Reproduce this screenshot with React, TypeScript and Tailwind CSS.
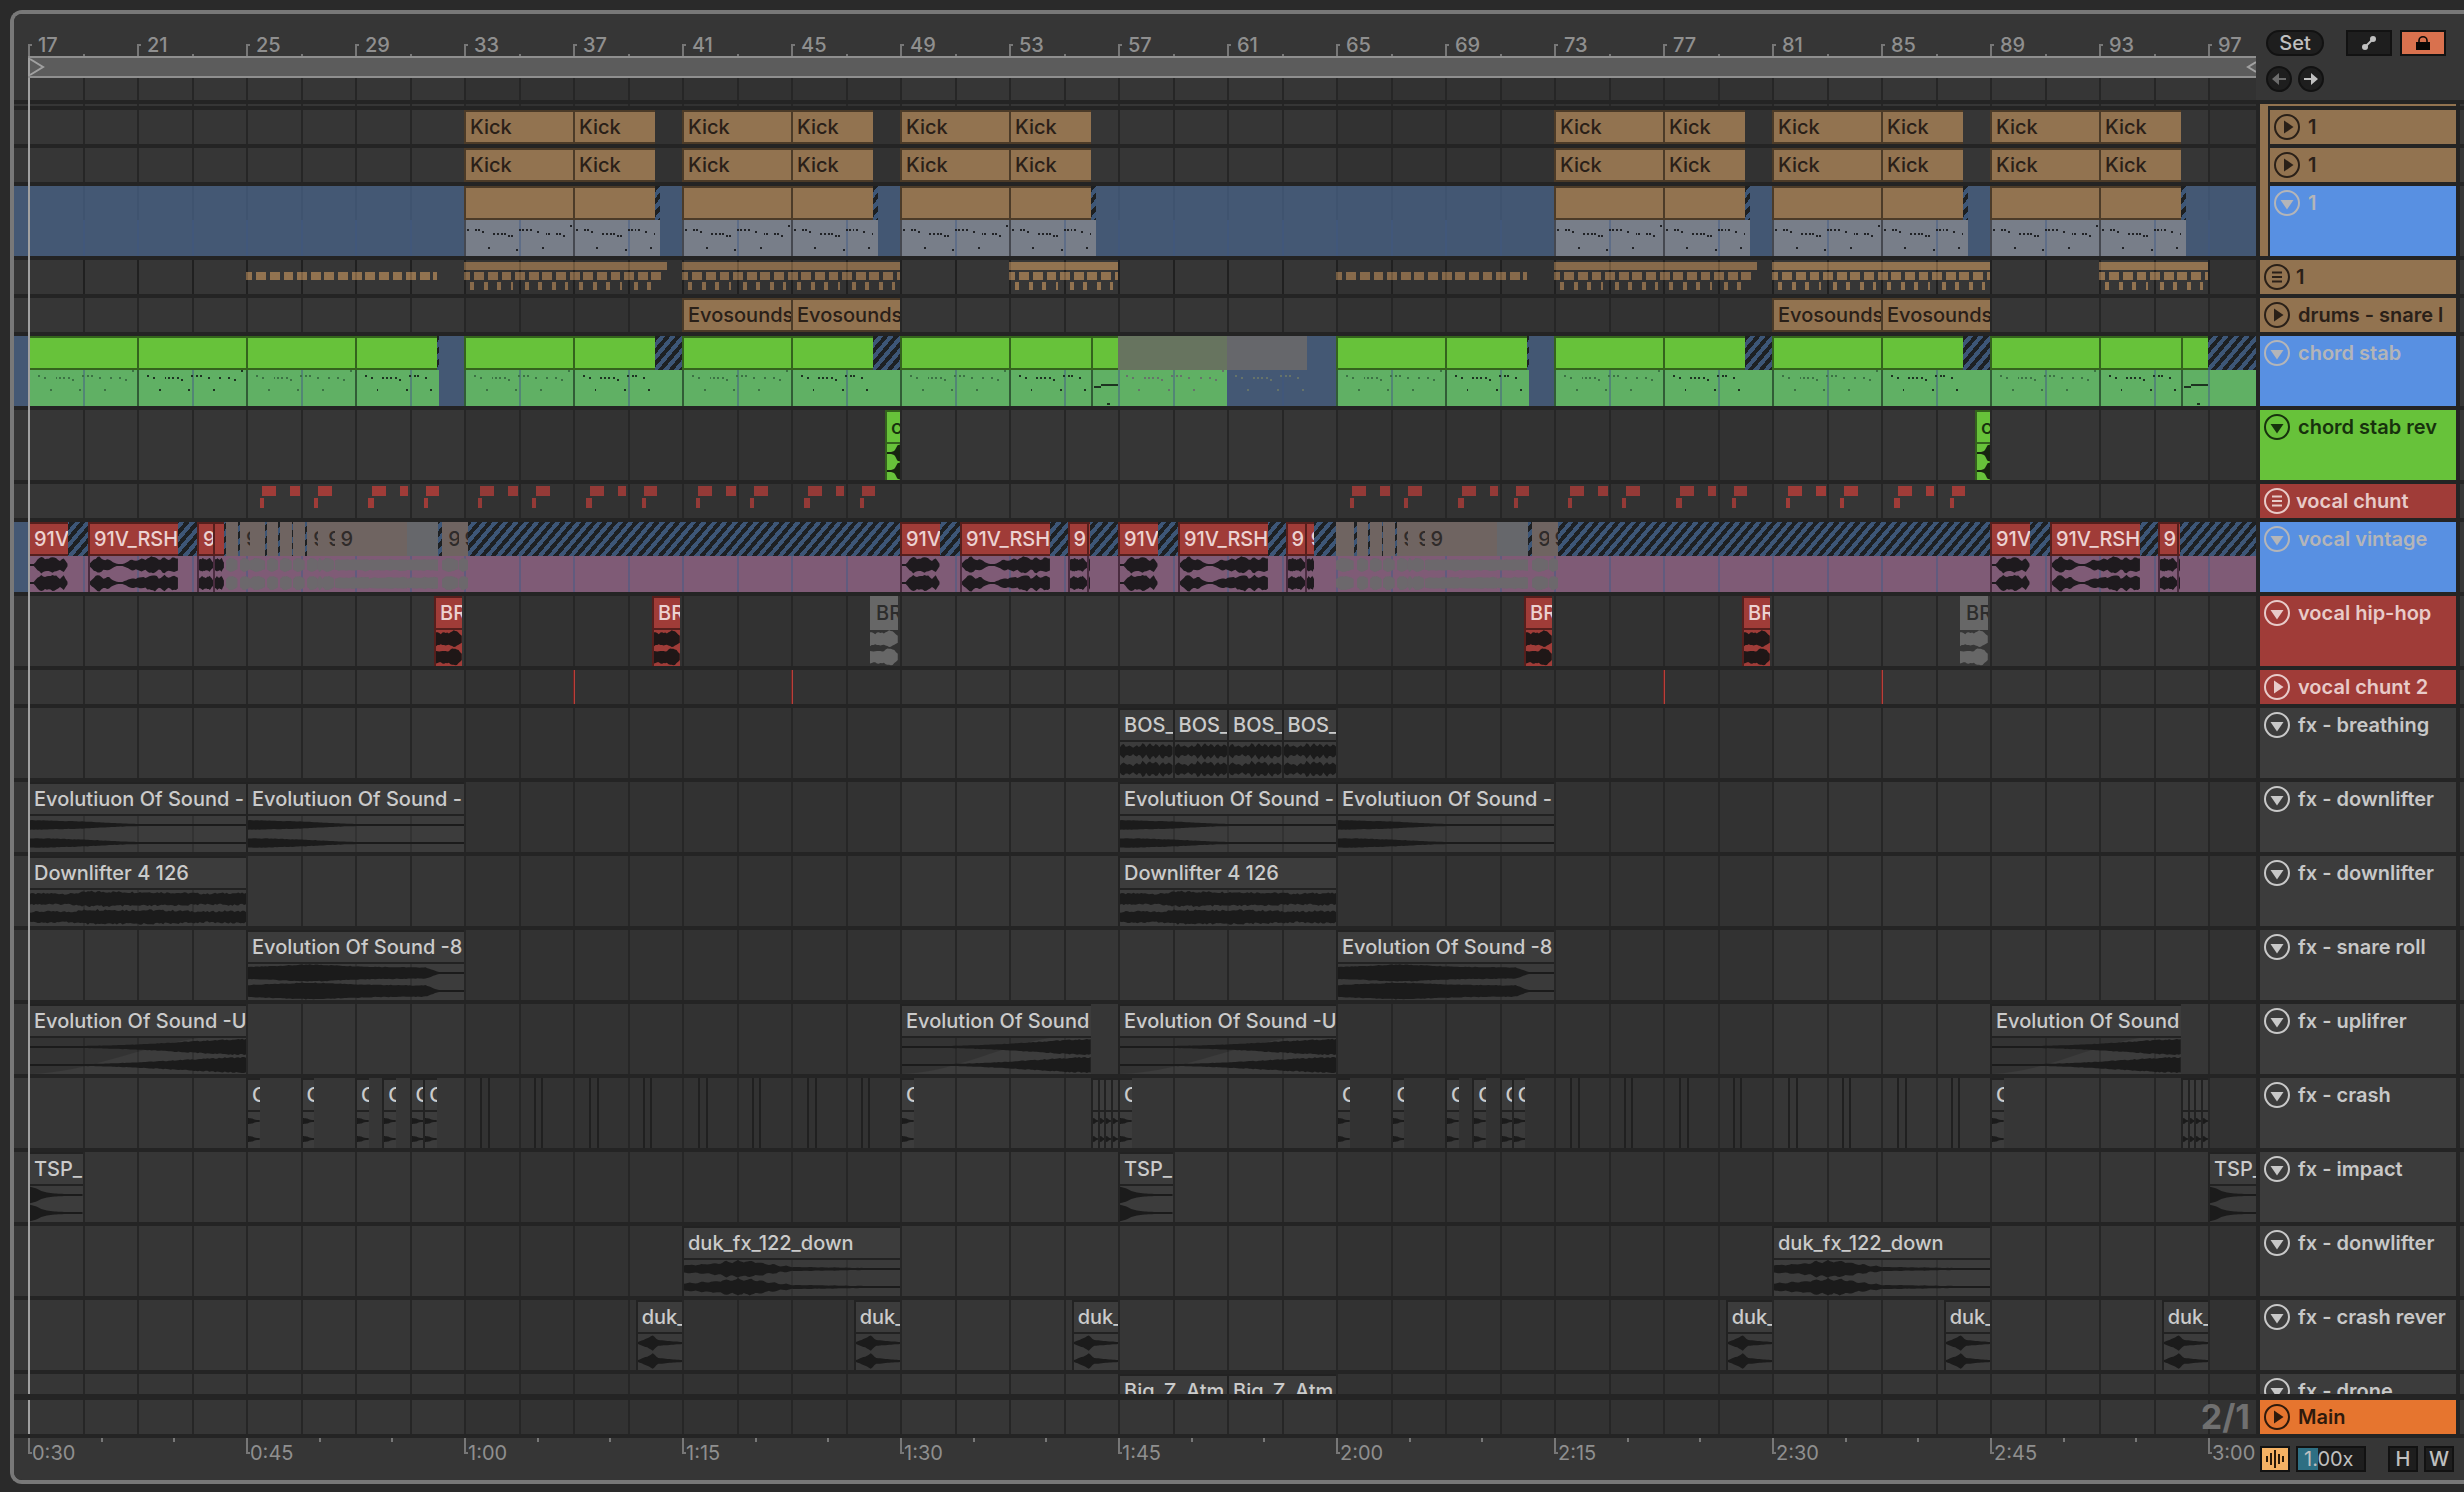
// App.tsx
// ============================================================================
// Arrangement view: beat ruler, clip lanes, track headers and time ruler
//
// Notes:
// - Horizontal positions are stored in bars and turned into percentages
// - Waveforms are generated from short amplitude envelopes
// ============================================================================

import { clsx } from "clsx";

const START = 16.486;
const SPAN = 82.275;
const END = START + SPAN;

const pos = (bar: number) => `${((bar - START) / SPAN) * 100}%`;
const size = (bars: number) => `${(bars / SPAN) * 100}%`;
const range = (n: number) => Array.from({ length: n }, (_, i) => i);

type Tone = "tan" | "tanSel" | "green" | "greenSel" | "red" | "redSel" | "gray" | "off" | "offSel" | "offGreen" | "offBlue";

type Clip = {
  at: number;
  len: number;
  tone: Tone;
  label?: string;
  wave?: keyof typeof ENVELOPES;
  notes?: "bass" | "stab" | "stabDim" | "stabOff" | "turn";
};

type Strip = { at: number; len: number; className: string };

type Track = {
  name: string;
  header: keyof typeof HEADERS;
  icon: "right" | "down" | "group";
  tall?: boolean;
  selected?: boolean;
  clips?: Clip[];
  strips?: Strip[];
  hatches?: [number, number][];
  blocks?: { at: number; len: number; row: "top" | "mid" | "low"; className: string }[];
  ticks?: { at: number; className: string }[];
};

const HEADERS = {
  tan: "bg-[#927350] text-[#2a2018]",
  blue: "bg-[#5890e2] text-[#b4b5b8]",
  green: "bg-[#67c23a] text-[#17320d]",
  red: "bg-[#a03c38] text-[#e8cbc9]",
  gray: "bg-[#3c3c3c] text-[#c8c8c8]",
  orange: "bg-[#e6752f] text-[#2f1a0c]",
};

const TONES: Record<Tone, { head: string; body: string; wave: string }> = {
  tan: { head: "bg-[#927350] border-[#4c3b28] text-[#2a2018] border-l-2 border-y-2", body: "", wave: "" },
  tanSel: {
    head: "bg-[#927350] border-[#4c3b28] border-l-2 border-y-2",
    body: "border-l-2 border-[#454850]",
    wave: "text-[#1e1e20]",
  },
  green: {
    head: "bg-[#67c23a] border-[#34631d] text-[#17320d] border-l-2 border-y-2",
    body: "bg-[#67c23a] border-l-2 border-[#34631d]",
    wave: "text-[#172410]",
  },
  greenSel: {
    head: "bg-[#67c23a] border-[#34631d] border-l-2 border-y-2",
    body: "border-l-2 border-[#315c36]",
    wave: "text-[#1d3321]",
  },
  red: {
    head: "bg-[#a03c38] border-[#561f1d] text-[#ecd2d1] border-l-2 border-y-2",
    body: "bg-[#a03c38] border-l-2 border-[#561f1d]",
    wave: "text-[#1f1717]",
  },
  redSel: {
    head: "bg-[#a03c38] border-[#561f1d] text-[#ecd2d1] border-l-2 border-y-2",
    body: "border-l-2 border-[#4a2c40]",
    wave: "text-[#1e1a1e]",
  },
  gray: {
    head: "bg-[#3c3c3c] border-[#222222] text-[#cbcbcb] border-l-2 border-y-2",
    body: "bg-[#454545]/40 border-l-2 border-[#222222]",
    wave: "text-[#1b1b1b]",
  },
  off: { head: "bg-[#676767] text-[#2c2c2c] border-l-2 border-y-2 border-[#676767]", body: "", wave: "text-[#676767]" },
  offSel: { head: "bg-[#6f6461] text-[#2f2b2a] border-l-2 border-y-2 border-[#6f6461]", body: "", wave: "text-[#6c686c]" },
  offGreen: { head: "bg-[#67745f]", body: "", wave: "" },
  offBlue: { head: "bg-[#66676b]", body: "", wave: "text-[#6c686c]" },
};

/* Amplitudes from 0 to 1, spread evenly over the clip */
const ENVELOPES = {
  phrase: { points: [0.1, 0.1, 0.6, 0.95, 0.7, 0.75, 0.9, 0.8, 0.5, 0.85, 0.15], jitter: 0.1 },
  verse: {
    points: [0.2, 0.7, 0.95, 0.5, 0.7, 0.3, 0.1, 0.1, 0.35, 0.6, 0.5, 0.7, 0.6, 0.9, 1, 0.5, 1, 0.6, 0.9, 0.7],
    jitter: 0.12,
  },
  word: { points: [0.6, 0.75, 0.6, 0.8, 0.3], jitter: 0.1 },
  chop: { points: [0.5, 0.8, 0.75, 0.5], jitter: 0.08 },
  drone: { points: [0.55, 0.65, 0.6, 0.65, 0.6, 0.7, 0.6, 0.65, 0.7, 0.65], jitter: 0.08 },
  shout: { points: [0.8, 0.6, 0.75, 0.65, 1, 0.85, 0.4], jitter: 0.12 },
  breath: {
    points: [0.45, 0.85, 0.4, 0.65, 0.35, 0.7, 0.4, 1, 0.45, 1, 0.5, 0.95, 0.4, 0.9, 0.45, 0.8, 0.4],
    jitter: 0.1,
  },
  fall: { points: [0.55, 0.52, 0.46, 0.38, 0.26, 0.16, 0.1, 0.1, 0.1, 0.1, 0.1, 0.1], jitter: 0.06 },
  noise: { points: [0.6, 0.65, 0.6, 0.85, 0.85, 0.8, 0.8, 0.75, 0.7, 0.6, 0.7, 0.65], jitter: 0.16 },
  roll: {
    points: [0.7, 0.75, 0.82, 0.88, 0.94, 0.98, 0.95, 0.88, 0.82, 0.76, 0.72, 0.7, 0.68, 0.66, 0.66, 0.1, 0.1, 0.1],
    jitter: 0.05,
  },
  rise: { points: [0.1, 0.1, 0.1, 0.14, 0.22, 0.32, 0.44, 0.58, 0.72, 0.84, 0.9], jitter: 0.08 },
  crash: { points: [0.35, 0.3, 0.14, 0.1], jitter: 0 },
  impact: { points: [0.98, 0.8, 0.45, 0.28, 0.2, 0.15, 0.12, 0.1, 0.1, 0.1], jitter: 0 },
  swell: {
    points: [
      0.4, 0.5, 0.4, 0.6, 0.5, 0.7, 0.6, 0.95, 0.7, 1, 0.75, 1, 0.7, 0.8, 0.45, 0.6, 0.3, 0.4, 0.22, 0.25, 0.2, 0.25,
      0.18, 0.22, 0.16, 0.2, 0.14, 0.16, 0.12, 0.14, 0.12, 0.12, 0.1, 0.1, 0.1, 0.1, 0.1,
    ],
    jitter: 0.06,
  },
  reverse: { points: [0.1, 0.35, 0.55, 0.9, 0.35, 0.3, 0.25, 0.2, 0.15, 0.12], jitter: 0.06 },
  pluck: { points: [0.12, 0.12, 0.14, 0.3, 0.9, 1], jitter: 0 },
};

/* x, y of each note in a four bar phrase, 109 units wide */
const BASS: [number, number][] = [
  [1, 9], [9, 9], [12, 9], [16, 11], [28, 13], [32, 13], [36, 13], [39, 13], [43, 15], [46, 15], [22, 27], [51, 29],
  [54, 9], [57, 9], [61, 9], [65, 9], [72, 11], [81, 13], [84, 13], [92, 13], [95, 13], [99, 15], [77, 27], [106, 5],
];
const STAB: [number, number][] = [
  [8, 5], [14, 7], [26, 7], [30, 7], [34, 7], [39, 7], [43, 9], [20, 19], [50, 19], [53, 5], [58, 5], [62, 5],
  [70, 7], [82, 7], [91, 7], [97, 9], [75, 19], [104, 0],
];
const TURN: [number, number][] = [
  [1, 16], [4, 16], [6, 16], [9, 14], [12, 14], [15, 14], [18, 14], [21, 14], [24, 14], [15, 33],
];

const NOTE_SETS = {
  bass: { notes: BASS, className: "text-[#202226]" },
  stab: { notes: STAB, className: "text-[#1d3321]" },
  stabDim: { notes: STAB, className: "text-[#3c7344]" },
  stabOff: { notes: STAB, className: "text-[#66736a]" },
  turn: { notes: TURN, className: "text-[#1d3321]" },
};

const KICK_STARTS = [33, 41, 49, 73, 81, 89];

const kicks: Clip[] = KICK_STARTS.flatMap((s): Clip[] => [
  { at: s, len: 4, tone: "tan", label: "Kick" },
  { at: s + 4, len: 3, tone: "tan", label: "Kick" },
]);

const bass: Clip[] = KICK_STARTS.flatMap((s): Clip[] => [
  { at: s, len: 4, tone: "tanSel", notes: "bass" },
  { at: s + 4, len: 3, tone: "tanSel", notes: "bass" },
]);

const stab = (at: number, len: number, notes: Clip["notes"]): Clip => ({ at, len, tone: "greenSel", notes });

const stabs: Clip[] = [
  stab(17, 4, "stabDim"),
  stab(21, 4, "stab"),
  stab(25, 4, "stabDim"),
  stab(29, 3, "stab"),
  ...[33, 41, 49].flatMap((s) => [stab(s, 4, "stabDim"), stab(s + 4, 3, "stab")]),
  stab(56, 1, "turn"),
  { at: 57, len: 4, tone: "offGreen", notes: "stabOff" },
  { at: 61, len: 2.95, tone: "offBlue", notes: "stabOff" },
  ...[65, 73, 81, 89].flatMap((s) => [stab(s, 4, "stabDim"), stab(s + 4, 3, "stab")]),
  stab(96, 1, "turn"),
];

const drumBlocks = [
  { at: 25, len: 7, full: false, className: "bg-[#927350]" },
  { at: 33, len: 7.45, full: true, className: "bg-[#876a4b]" },
  { at: 41, len: 8, full: true, className: "bg-[#876a4b]" },
  { at: 53, len: 4, full: true, className: "bg-[#927350]" },
  { at: 65, len: 7, full: false, className: "bg-[#876a4b]" },
  { at: 73, len: 7.45, full: true, className: "bg-[#876a4b]" },
  { at: 81, len: 8, full: true, className: "bg-[#927350]" },
  { at: 93, len: 4, full: true, className: "bg-[#927350]" },
].flatMap(({ at, len, full, className }) => [
  { at, len: 0.22, row: "mid" as const, className },
  ...range(Math.floor(len * 2)).map((i) => ({
    at: at + 0.38 + i * 0.5,
    len: Math.min(0.36, len - 0.38 - i * 0.5),
    row: "mid" as const,
    className,
  })),
  ...(full
    ? [
        { at, len, row: "top" as const, className },
        ...range(Math.floor(len * 2)).map((i) => ({
          at: at + 0.22 + i * 0.5,
          len: i % 4 === 3 ? 0.09 : 0.15,
          row: "low" as const,
          className,
        })),
      ]
    : []),
]);

const chuntBlocks = [25, 33, 41, 65, 73, 81].flatMap((s) => {
  const className = s === 25 || s === 81 ? "bg-[#a03c38]" : "bg-[#943a37]";
  return [
    ...[[0.59, 0.5], [1.6, 0.37], [2.64, 0.5], [4.62, 0.5], [5.65, 0.3], [6.6, 0.5]].map(([at, len]) => ({
      at: s + at,
      len,
      row: "top" as const,
      className,
    })),
    ...[[0.51, 0.15], [2.5, 0.15], [4.47, 0.21], [6.53, 0.15]].map(([at, len]) => ({
      at: s + at,
      len,
      row: "mid" as const,
      className,
    })),
  ];
});

const phrase = (s: number): Clip[] => [
  { at: s, len: 1.45, tone: "redSel", label: "91V", wave: "phrase" },
  { at: s + 2.2, len: 3.3, tone: "redSel", label: "91V_RSH", wave: "verse" },
];

const word = (at: number, len: number, label = "9"): Clip => ({ at, len, tone: "redSel", label, wave: "word" });

const muted = (at: number, len: number, label?: string, wave: Clip["wave"] = "chop"): Clip => ({
  at,
  len,
  tone: "offSel",
  label,
  wave,
});

const mutedRun = (s: number): Clip[] => [
  muted(s + 0.77, 0.41),
  muted(s + 1.25, 0.43),
  muted(s + 1.73, 0.43),
  muted(s + 2.25, 0.4, "9"),
  muted(s + 2.65, 0.15),
  muted(s + 2.8, 0.45, "9"),
  muted(s + 3.25, 1.25, "9", "drone"),
  muted(s + 4.5, 1.4, undefined, "drone"),
  { ...muted(s + 5.9, 1.15, undefined, "drone"), tone: "offBlue" },
  muted(s + 7.2, 0.6, "9"),
  muted(s + 7.8, 0.35, "9"),
];

const vintage: Clip[] = [
  ...phrase(17),
  word(23.2, 0.6),
  word(23.8, 0.4, ""),
  muted(24.28, 0.42),
  muted(24.78, 0.37, "9"),
  muted(25.15, 0.55),
  ...mutedRun(25),
  ...phrase(49),
  word(55.15, 0.7),
  word(55.85, 0.12, ""),
  ...phrase(57),
  word(63.15, 0.7),
  word(63.85, 0.35),
  muted(65, 0.65),
  ...mutedRun(65),
  ...phrase(89),
  word(95.15, 0.7),
  word(95.85, 0.12, ""),
];

const fx = (at: number, len: number, label: string, wave: Clip["wave"]): Clip => ({
  at,
  len,
  tone: "gray",
  label,
  wave,
});

const crashTicks = [33, 73].flatMap((s) =>
  range(8).flatMap((i) => [
    { at: s + i * 2 + 0.58, className: "bg-[#202020]" },
    { at: s + i * 2 + (i % 2 ? 0.82 : 0.88), className: "bg-[#202020]" },
  ]),
);

const RED_TICK = "bg-[#b8403b] border-l border-[#6a2523]";

const TRACKS: Track[] = [
  { name: "1", header: "tan", icon: "right", clips: kicks },
  { name: "1", header: "tan", icon: "right", clips: kicks },
  {
    name: "1",
    header: "blue",
    icon: "down",
    tall: true,
    selected: true,
    strips: KICK_STARTS.map((s) => ({ at: s, len: 7.2, className: "bg-[#787e89]" })),
    hatches: KICK_STARTS.map((s) => [s + 7, 0.2]),
    clips: bass,
  },
  { name: "1", header: "tan", icon: "group", blocks: drumBlocks },
  {
    name: "drums - snare l",
    header: "tan",
    icon: "right",
    clips: [41, 45, 81, 85].map((at) => ({ at, len: 4, tone: "tan", label: "Evosounds" })),
  },
  {
    name: "chord stab",
    header: "blue",
    icon: "down",
    tall: true,
    selected: true,
    strips: [
      { at: 17, len: 15.08, className: "bg-[#60b064]" },
      { at: 33, len: 28, className: "bg-[#60b064]" },
      { at: 65, len: 7.08, className: "bg-[#60b064]" },
      { at: 73, len: END - 73, className: "bg-[#60b064]" },
    ],
    hatches: [[32, 0.08], [40, 1], [48, 1], [72, 0.08], [80, 1], [88, 1], [97, END - 97]],
    clips: stabs,
  },
  {
    name: "chord stab rev",
    header: "green",
    icon: "down",
    tall: true,
    clips: [48.45, 88.45].map((at) => ({ at, len: 0.55, tone: "green", label: "c", wave: "pluck" })),
  },
  { name: "vocal chunt", header: "red", icon: "group", blocks: chuntBlocks },
  {
    name: "vocal vintage",
    header: "blue",
    icon: "down",
    tall: true,
    selected: true,
    strips: [{ at: 17, len: END - 17, className: "bg-[#7f5b76]" }],
    hatches: [[17, END - 17]],
    clips: vintage,
  },
  {
    name: "vocal hip-hop",
    header: "red",
    icon: "down",
    tall: true,
    clips: [32, 40, 48, 72, 80, 88].map((at) => ({
      at: at - 0.1,
      len: 1.02,
      tone: at === 48 || at === 88 ? "off" : "red",
      label: "BR",
      wave: "shout",
    })),
  },
  {
    name: "vocal chunt 2",
    header: "red",
    icon: "right",
    ticks: [37, 45, 77, 85].map((at) => ({ at, className: RED_TICK })),
  },
  {
    name: "fx - breathing",
    header: "gray",
    icon: "down",
    tall: true,
    clips: [57, 59, 61, 63].map((at) => fx(at, 2, "BOS_", "breath")),
  },
  {
    name: "fx - downlifter",
    header: "gray",
    icon: "down",
    tall: true,
    clips: [17, 25, 57, 65].map((at) => fx(at, 8, "Evolutiuon Of Sound -", "fall")),
  },
  {
    name: "fx - downlifter",
    header: "gray",
    icon: "down",
    tall: true,
    clips: [17, 57].map((at) => fx(at, 8, "Downlifter 4 126", "noise")),
  },
  {
    name: "fx - snare roll",
    header: "gray",
    icon: "down",
    tall: true,
    clips: [25, 65].map((at) => fx(at, 8, "Evolution Of Sound -8", "roll")),
  },
  {
    name: "fx - uplifrer",
    header: "gray",
    icon: "down",
    tall: true,
    clips: [
      fx(17, 8, "Evolution Of Sound -U", "rise"),
      fx(49, 7, "Evolution Of Sound", "rise"),
      fx(57, 8, "Evolution Of Sound -U", "rise"),
      fx(89, 7, "Evolution Of Sound", "rise"),
    ],
  },
  {
    name: "fx - crash",
    header: "gray",
    icon: "down",
    tall: true,
    clips: [
      ...[25, 27, 29, 30, 31, 31.5, 49, 57, 65, 67, 69, 70, 71, 71.45, 89].map((at) => fx(at, 0.5, "C", "crash")),
      ...[56, 56.25, 56.5, 56.75, 96, 96.25, 96.5, 96.75].map((at) => fx(at, 0.25, "", "crash")),
    ],
    ticks: crashTicks,
  },
  {
    name: "fx - impact",
    header: "gray",
    icon: "down",
    tall: true,
    clips: [17, 57, 97].map((at) => fx(at, 2, "TSP_", "impact")),
  },
  {
    name: "fx - donwlifter",
    header: "gray",
    icon: "down",
    tall: true,
    clips: [41, 81].map((at) => fx(at, 8, "duk_fx_122_down", "swell")),
  },
  {
    name: "fx - crash rever",
    header: "gray",
    icon: "down",
    tall: true,
    clips: [41, 49, 57, 81, 89, 97].map((at) => fx(at - 1.7, 1.7, "duk_", "reverse")),
  },
  {
    name: "fx - drone",
    header: "gray",
    icon: "down",
    tall: true,
    clips: [57, 61].map((at) => fx(at, 4, "Big_Z_Atm", "noise")),
  },
];

const GROUP_SIZE = 3;

const Waveform = ({ name, len }: { name: keyof typeof ENVELOPES; len: number }) => {
  const { points, jitter } = ENVELOPES[name];
  const n = Math.max(16, Math.round(len * 14));
  const amp = (i: number, seed: number) => {
    const t = (i / n) * (points.length - 1);
    const k = Math.min(Math.floor(t), points.length - 2);
    const base = points[k] + (points[k + 1] - points[k]) * (t - k);
    const noise = Math.sin((i + seed) * 12.9898) * 43758.5453;
    return Math.max(1, 8.5 * base * (1 + (noise - Math.floor(noise) - 0.5) * jitter * 2));
  };
  const channel = (mid: number) => {
    const up = range(n + 1).map((i) => `${(i / n) * 100},${mid - amp(i, mid)}`);
    const down = range(n + 1).map((i) => `${(i / n) * 100},${mid + amp(i, mid + 5)}`);
    return [...up, ...down.reverse()].join(" ");
  };

  return (
    <svg viewBox="0 0 100 36" preserveAspectRatio="none" className="h-full w-full" aria-hidden="true">
      {/* Fade-in curve */}
      {name === "rise" && <path d="M0 0V36C28 34 48 10 78 0Z" fill="black" opacity="0.14" />}
      <polygon points={channel(9)} fill="currentColor" />
      <polygon points={channel(27)} fill="currentColor" />
    </svg>
  );
};

const Notes = ({ set, len }: { set: keyof typeof NOTE_SETS; len: number }) => {
  const width = len * 27.25;
  return (
    <svg
      viewBox={`0 0 ${width} 36`}
      preserveAspectRatio="none"
      className={clsx("h-full w-full", NOTE_SETS[set].className)}
      shapeRendering="crispEdges"
      aria-hidden="true"
    >
      {NOTE_SETS[set].notes.map(([x, y]) => (
        <rect key={`${x}-${y}`} x={x} y={y} width={set === "turn" ? 3 : 2} height="2" fill="currentColor" />
      ))}
    </svg>
  );
};

const GridLines = ({ className }: { className: string }) => (
  <>
    {range(41).map((i) => (
      <div key={i} className={clsx("absolute bottom-0 w-0.5", className)} style={{ left: pos(17 + i * 2) }} />
    ))}
  </>
);

const ClipView = ({ clip, tall }: { clip: Clip; tall?: boolean }) => {
  const tone = TONES[clip.tone];
  return (
    <div
      className="absolute inset-y-0 flex flex-col overflow-hidden"
      style={{ left: pos(clip.at), width: size(clip.len) }}
    >
      <div
        className={clsx(
          "h-[34px] shrink-0 overflow-hidden whitespace-nowrap font-medium leading-[30px]",
          clip.label && "pl-1",
          tone.head,
        )}
      >
        {clip.label}
      </div>
      {tall && (
        <div className={clsx("min-h-0 flex-1", tone.body, tone.wave)}>
          {clip.wave && <Waveform name={clip.wave} len={clip.len} />}
          {clip.notes && <Notes set={clip.notes} len={clip.len} />}
        </div>
      )}
    </div>
  );
};

const BLOCK_ROWS = {
  drums: { top: "top-0.5 h-2", mid: "top-3 h-2", low: "top-[22px] h-2" },
  vocal: { top: "top-0.5 h-2.5", mid: "top-3.5 h-2.5", low: "" },
};

const Lane = ({ track }: { track: Track }) => {
  const rows = track.header === "tan" ? BLOCK_ROWS.drums : BLOCK_ROWS.vocal;
  return (
    <div className="shrink-0 border-b-4 border-[#242424]">
      <div
        className={clsx(
          "relative overflow-hidden",
          track.tall ? "h-[70px]" : "h-[34px]",
          track.selected && "bg-[#4a678f]/70",
        )}
      >
        {track.strips?.map((s) => (
          <div
            key={s.at}
            className={clsx("absolute bottom-0 top-[34px]", s.className)}
            style={{ left: pos(s.at), width: size(s.len) }}
          />
        ))}
        {track.selected && <GridLines className="top-[34px] bg-[#445c86]/50" />}
        {track.hatches?.map(([at, len]) => (
          <div
            key={at}
            className="absolute top-0 h-[34px] bg-[repeating-linear-gradient(130deg,#1d2023_0_4px,#3d5677_4px_8px)]"
            style={{ left: pos(at), width: size(len) }}
          />
        ))}
        {track.blocks?.map((b) => (
          <div
            key={`${b.at}-${b.row}-${b.len}`}
            className={clsx("absolute", rows[b.row], b.className)}
            style={{ left: pos(b.at), width: size(b.len) }}
          />
        ))}
        {track.icon === "group" && track.header === "tan" && <GridLines className="top-0 bg-black/15" />}
        {track.ticks?.map((t) => (
          <div key={t.at} className={clsx("absolute inset-y-0 w-0.5", t.className)} style={{ left: pos(t.at) }} />
        ))}
        {track.clips?.map((c) => (
          <ClipView key={c.at} clip={c} tall={track.tall} />
        ))}
      </div>
    </div>
  );
};

const FoldIcon = ({ icon }: { icon: Track["icon"] }) => (
  <svg viewBox="0 0 26 26" className="size-[26px]" aria-hidden="true">
    <circle cx="13" cy="13" r="12" fill="none" stroke="currentColor" strokeWidth="2" />
    {icon === "right" && <path d="M10 6.5 19.5 13 10 19.5Z" fill="currentColor" />}
    {icon === "down" && <path d="M6.5 10h13L13 19.5Z" fill="currentColor" />}
    {icon === "group" && <path d="M8 8.5h10M8 13h10M8 17.5h10" stroke="currentColor" strokeWidth="2" />}
  </svg>
);

const TrackHeader = ({ track }: { track: Track }) => (
  <div className="flex shrink-0 gap-1 border-b-4 border-[#242424]">
    <div
      className={clsx(
        "flex min-w-0 flex-1 items-start overflow-hidden whitespace-nowrap pl-1 pt-1 font-semibold leading-[26px]",
        track.icon === "group" ? "gap-1.5" : "gap-2",
        track.tall ? "h-[70px]" : "h-[34px]",
        HEADERS[track.header],
      )}
    >
      <button type="button" aria-label={`Fold ${track.name}`} className="shrink-0">
        <FoldIcon icon={track.icon} />
      </button>
      <span>{track.name}</span>
    </div>
    <div className="w-1 bg-[#363636]" />
  </div>
);

const BeatRuler = () => (
  <div className="relative h-[42px] shrink-0 overflow-hidden font-medium text-[#8f8f8f]">
    {range(21).map((i) => (
      <div key={i} className="absolute bottom-0 flex items-end" style={{ left: pos(17 + i * 4) }}>
        <span className="h-3 w-1 border-l-2 border-t-2 border-[#777777]" />
        <span className="pl-1.5 leading-[22px]">{17 + i * 4}</span>
      </div>
    ))}
    {range(20).map((i) => (
      <div key={i} className="absolute bottom-0 h-0.5 w-0.5 bg-[#777777]" style={{ left: pos(19 + i * 4) }} />
    ))}
  </div>
);

const LoopBrace = () => (
  <div className="relative h-[22px] shrink-0">
    <div
      className="absolute inset-y-0 right-0 flex items-center justify-between border-y-2 border-[#8f8f8f] bg-[#5c5c5c] text-[#a0a0a0]"
      style={{ left: pos(17) }}
    >
      <svg viewBox="0 0 18 18" className="size-[18px]" aria-hidden="true">
        <path d="M1 0v18M2 1l13 8L2 17" fill="none" stroke="currentColor" strokeWidth="2" />
      </svg>
      <svg viewBox="0 0 10 18" className="h-[18px] w-2.5" aria-hidden="true">
        <path d="M10 4 2 9l8 5" fill="none" stroke="currentColor" strokeWidth="2" />
      </svg>
    </div>
  </div>
);

const formatTime = (seconds: number) => `${Math.floor(seconds / 60)}:${String(seconds % 60).padStart(2, "0")}`;

const TimeRuler = () => (
  <div className="relative h-[42px] shrink-0 overflow-hidden text-[#8f8f8f]">
    {range(11).map((i) => (
      <div key={i} className="absolute top-0 flex" style={{ left: pos(17 + i * 8) }}>
        <span className="h-4 w-1 border-b-2 border-l-2 border-[#777777]" />
        <span className="pt-1 leading-[22px]">{formatTime(30 + i * 15)}</span>
      </div>
    ))}
    {range(30)
      .filter((i) => i % 3 !== 0)
      .map((i) => (
        <div key={i} className="absolute top-0 h-1 w-0.5 bg-[#777777]" style={{ left: pos(17 + (i * 8) / 3) }} />
      ))}
  </div>
);

/* 16 bar blocks alternate between two greys */
const GridBackground = () => (
  <div className="absolute inset-0">
    {[33, 65, 97].map((bar) => (
      <div
        key={bar}
        className="absolute inset-y-0 bg-[#323232]"
        style={{ left: pos(bar), width: size(Math.min(16, END - bar)) }}
      />
    ))}
    <GridLines className="top-0 bg-[#262626]" />
  </div>
);

const Timeline = () => (
  <section aria-label="Arrangement" className="relative flex min-w-0 flex-1 flex-col bg-[#363636]">
    <BeatRuler />
    <LoopBrace />
    <div className="relative flex min-h-0 flex-1 flex-col overflow-hidden">
      <GridBackground />
      <div className="relative flex flex-col">
        <div className="h-[26px] shrink-0 border-b-4 border-[#242424]" />
        <div className="h-1.5 shrink-0 border-b-4 border-[#242424]" />
        {TRACKS.map((track, i) => (
          <Lane key={i} track={track} />
        ))}
      </div>
      <div className="absolute inset-y-0 w-0.5 bg-[#a0a0a0]" style={{ left: pos(17) }} />
    </div>
    <div className="relative h-11 shrink-0 border-b-4 border-t-[6px] border-[#242424]">
      <GridBackground />
      <div className="absolute inset-y-0 w-0.5 bg-[#a0a0a0]" style={{ left: pos(17) }} />
      <div className="relative flex h-full items-center justify-end pr-1.5 text-[34px] font-bold leading-none text-[#707070]">
        2/1
      </div>
    </div>
    <TimeRuler />
  </section>
);

const DARK_BUTTON = "border-2 border-[#121212] bg-[#1e1e1e] text-[#c0c0c0]";

const TopControls = () => (
  <div className="flex h-[86px] shrink-0 flex-col gap-2.5 bg-[#363636] pl-2.5 pr-[18px] pt-4">
    <div className="flex gap-2">
      <button
        type="button"
        className={clsx("mr-3.5 flex h-[26px] w-[58px] items-center justify-center rounded-full font-medium", DARK_BUTTON)}
      >
        Set
      </button>
      <button
        type="button"
        aria-label="Automation mode"
        className={clsx("flex h-[26px] flex-1 items-center justify-center", DARK_BUTTON)}
      >
        <svg viewBox="0 0 16 16" className="size-4" aria-hidden="true">
          <path d="M4 12 12 4" stroke="currentColor" strokeWidth="2" />
          <circle cx="4" cy="12" r="3" fill="currentColor" />
          <circle cx="12" cy="4" r="3" fill="currentColor" />
        </svg>
      </button>
      <button
        type="button"
        aria-label="Lock envelopes"
        className="flex h-[26px] flex-1 items-center justify-center border-2 border-[#121212] bg-[#d9714e] text-[#0c0806]"
      >
        <svg viewBox="0 0 14 14" className="size-3.5" aria-hidden="true">
          <path d="M3 7V4.5a4 3.7 0 0 1 8 0V7" fill="none" stroke="currentColor" strokeWidth="1.6" />
          <path d="M0 6h14v8H0Z" fill="currentColor" />
        </svg>
      </button>
    </div>
    <div className="flex gap-1.5">
      <button
        type="button"
        aria-label="Previous locator"
        className="flex size-[26px] items-center justify-center rounded-full border-2 border-[#121212] bg-[#1e1e1e] text-[#6c6c6c]"
      >
        <svg viewBox="0 0 14 12" className="h-3 w-3.5" aria-hidden="true">
          <path d="M14 5v2H7v5L0 6l7-6v5Z" fill="currentColor" />
        </svg>
      </button>
      <button
        type="button"
        aria-label="Next locator"
        className={clsx("flex size-[26px] items-center justify-center rounded-full", DARK_BUTTON)}
      >
        <svg viewBox="0 0 14 12" className="h-3 w-3.5" aria-hidden="true">
          <path d="M0 5v2h7v5l7-6-7-6v5Z" fill="currentColor" />
        </svg>
      </button>
    </div>
  </div>
);

const BottomControls = () => (
  <div className="flex h-[42px] shrink-0 items-start bg-[#363636] pr-2.5 pt-2">
    <button
      type="button"
      aria-label="Waveform height"
      className="flex h-[26px] w-[30px] items-center justify-center border-2 border-[#121212] bg-[#f5b264] text-[#2a1a08]"
    >
      <svg viewBox="0 0 18 18" className="size-[18px]" aria-hidden="true">
        <path d="M1 6v6M5 3v12M9 0v18M13 4v10M17 6v6" stroke="currentColor" strokeWidth="2" />
      </svg>
    </button>
    <input
      type="text"
      aria-label="Waveform zoom"
      defaultValue="1.00x"
      className="ml-1.5 h-[26px] w-[70px] border-2 border-[#121212] bg-[linear-gradient(90deg,#2e6f83_20px,#1e1e1e_20px)] pl-1.5 text-[#c0c0c0]"
    />
    <button type="button" className={clsx("ml-auto h-[26px] w-[30px] font-medium leading-[22px]", DARK_BUTTON)}>
      H
    </button>
    <button type="button" className={clsx("ml-1.5 h-[26px] w-[30px] font-medium leading-[22px]", DARK_BUTTON)}>
      W
    </button>
  </div>
);

const TrackHeaders = () => (
  <section aria-label="Tracks" className="flex w-[208px] shrink-0 flex-col bg-[#242424]">
    <TopControls />
    <div className="flex min-h-0 flex-1 flex-col overflow-hidden pl-1 pt-1">
      {/* Drum group, with its colour bar down the left */}
      <div className="relative flex shrink-0">
        <div className="mb-1 w-2 shrink-0 bg-[#927350]" />
        <div className="flex min-w-0 flex-1 flex-col">
          <div className="mb-1 flex h-0.5 gap-1">
            <div className="flex-1 bg-[#927350]" />
            <div className="w-1 bg-[#363636]" />
          </div>
          <div className="flex flex-col pl-0.5">
            {TRACKS.slice(0, GROUP_SIZE).map((track, i) => (
              <TrackHeader key={i} track={track} />
            ))}
          </div>
        </div>
      </div>
      {TRACKS.slice(GROUP_SIZE).map((track, i) => (
        <TrackHeader key={i} track={track} />
      ))}
    </div>
    <div className="shrink-0 border-t-[6px] border-[#242424] pl-1">
      <TrackHeader track={{ name: "Main", header: "orange", icon: "right" }} />
    </div>
    <div className="shrink-0 bg-[#363636] pl-1">
      <BottomControls />
    </div>
  </section>
);

const App = () => (
  <main className="h-screen bg-[#2a2a2a] pb-2 pl-2.5 pt-2.5 font-['Inter','Liberation_Sans',sans-serif] text-[20px]">
    <div className="flex h-full overflow-hidden rounded-l-xl border-4 border-r-0 border-[#787878]">
      <Timeline />
      <TrackHeaders />
    </div>
  </main>
);

export default App;
